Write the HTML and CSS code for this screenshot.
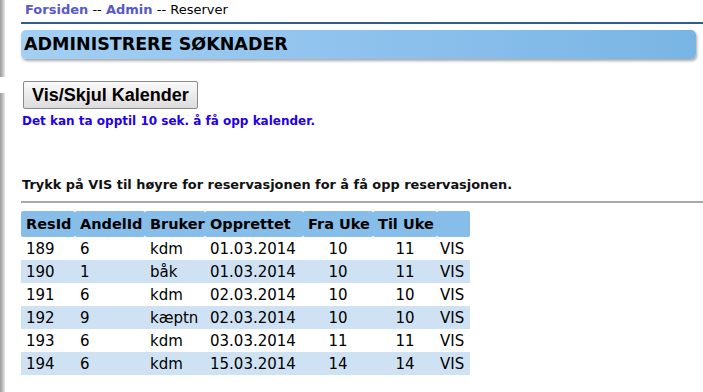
FILE: index.html
```html
<!DOCTYPE html>
<html lang="no">
<head>
    <meta charset="UTF-8">
    <title>Reserver</title>
    <link rel="stylesheet" href="styles.css">
</head>
<body>
    <div class="sidebar">
        <div class="side-top"></div>
        <div class="side-bottom"></div>
    </div>

    <div class="content">
        <div class="crumbs">
            <a href="#">Forsiden</a> -- <a href="#">Admin</a> -- Reserver
        </div>

        <div class="title-bar">ADMINISTRERE SØKNADER</div>

        <button class="toggle">Vis/Skjul Kalender</button>
        <div class="note">Det kan ta opptil 10 sek. å få opp kalender.</div>

        <div class="hint">Trykk på VIS til høyre for reservasjonen for å få opp reservasjonen.</div>
        <hr class="sep">

        <table class="res">
            <colgroup>
                <col class="c-id">
                <col class="c-andel">
                <col class="c-user">
                <col class="c-date">
                <col class="c-from">
                <col class="c-to">
                <col class="c-vis">
            </colgroup>
            <tr>
                <th>ResId</th>
                <th>AndelId</th>
                <th>Bruker</th>
                <th>Opprettet</th>
                <th>Fra Uke</th>
                <th>Til Uke</th>
                <th></th>
            </tr>
            <tr>
                <td>189</td><td>6</td><td>kdm</td><td>01.03.2014</td>
                <td class="num">10</td><td class="num">11</td><td class="vis"><a href="#">VIS</a></td>
            </tr>
            <tr>
                <td>190</td><td>1</td><td>båk</td><td>01.03.2014</td>
                <td class="num">10</td><td class="num">11</td><td class="vis"><a href="#">VIS</a></td>
            </tr>
            <tr>
                <td>191</td><td>6</td><td>kdm</td><td>02.03.2014</td>
                <td class="num">10</td><td class="num">10</td><td class="vis"><a href="#">VIS</a></td>
            </tr>
            <tr>
                <td>192</td><td>9</td><td>kæptn</td><td>02.03.2014</td>
                <td class="num">10</td><td class="num">10</td><td class="vis"><a href="#">VIS</a></td>
            </tr>
            <tr>
                <td>193</td><td>6</td><td>kdm</td><td>03.03.2014</td>
                <td class="num">11</td><td class="num">11</td><td class="vis"><a href="#">VIS</a></td>
            </tr>
            <tr>
                <td>194</td><td>6</td><td>kdm</td><td>15.03.2014</td>
                <td class="num">14</td><td class="num">14</td><td class="vis"><a href="#">VIS</a></td>
            </tr>
        </table>
    </div>
</body>
</html>
```

FILE: styles.css
```css
body {
    margin: 0;
    padding: 0;
    background: #fff;
    font-family: "DejaVu Sans", Verdana, sans-serif;
    color: #000;
    display: flex;
    overflow: hidden;
}

.sidebar {
    width: 5px;
    height: 392px;
    display: flex;
    flex-direction: column;
    flex-shrink: 0;
}

.side-top,
.side-bottom {
    background: linear-gradient(to right, #9a9a9a, #c4c4c4 60%, #e8e8e8);
}

.side-top {
    height: 77px;
}

.side-bottom {
    margin-top: 16px;
    flex: 1;
}

.content {
    flex: 1;
    padding-left: 16px;
}

.crumbs {
    font-size: 13px;
    height: 22px;
    line-height: 20px;
    padding-left: 4px;
    color: #000;
    border-bottom: 2px solid #2f5d8c;
    margin-bottom: 6px;
}

.crumbs a {
    color: #5858cc;
    font-weight: bold;
    text-decoration: none;
}

.title-bar {
    height: 29px;
    margin-right: 7px;
    padding-left: 3px;
    line-height: 29px;
    font-size: 17.5px;
    font-weight: bold;
    border-radius: 5px;
    background: linear-gradient(to right, #a3cff3, #8ec2ed 50%, #79b5e4);
    box-shadow: 1px 2px 3px rgba(0, 0, 0, 0.35);
}

.toggle {
    margin: 22px 0 0 2px;
    height: 28px;
    padding: 0 8px;
    font-family: "Liberation Sans", Arial, sans-serif;
    font-size: 18px;
    font-weight: bold;
    color: #000;
    background: linear-gradient(#fafafa, #dcdcdc);
    border: 1px solid #8a8a8a;
    border-radius: 2px;
}

.note {
    margin-top: 5px;
    padding-left: 1px;
    font-size: 12px;
    font-weight: bold;
    color: #2200ee;
}

.hint {
    margin-top: 49px;
    padding-left: 1px;
    font-size: 12.9px;
    font-weight: bold;
    color: #111;
}

.sep {
    margin: 9px 0 8px 0;
    border: none;
    border-top: 2px solid #a8a8a8;
}

.res {
    border-collapse: collapse;
    table-layout: fixed;
    width: 449px;
    font-size: 15px;
}

.c-id { width: 54px; }
.c-andel { width: 70px; }
.c-user { width: 60px; }
.c-date { width: 98px; }
.c-from { width: 70px; }
.c-to { width: 64px; }
.c-vis { width: 33px; }

.res th {
    background: #86bde9;
    height: 26px;
    padding: 0 0 0 5px;
    text-align: left;
    font-size: 14.5px;
    font-weight: bold;
    white-space: nowrap;
    border-radius: 2px;
}

.res td {
    height: 23px;
    padding: 0 0 0 5px;
    white-space: nowrap;
}

.res tr:nth-child(odd) td {
    background: #cfe2f3;
}

.res td.num {
    text-align: center;
    padding: 0;
}

.res td.vis {
    padding-left: 3px;
}

.res a {
    color: #000;
    text-decoration: none;
}
```
